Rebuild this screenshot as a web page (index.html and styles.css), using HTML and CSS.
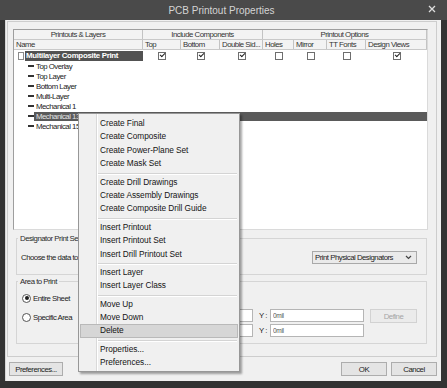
FILE: index.html
```html
<!DOCTYPE html>
<html>
<head>
	<title>PCB Printout Properties</title>
	<link rel="stylesheet" href="styles.css">
</head>
<body>
	<div class="titlebar">
		<span></span>
		<span class="title">PCB Printout Properties</span>
		<span class="close">
			<svg width="8" height="8" viewBox="0 0 8 8"><path d="M1 1 L7 7 M7 1 L1 7" stroke="#dedede" stroke-width="1.3" fill="none"/></svg>
		</span>
	</div>

	<div class="client">
		<div class="panel">
			<div class="list">
				<div class="hdr hdr-group">
					<div>Printouts &amp; Layers</div>
					<div class="span3">Include Components</div>
					<div class="span4">Printout Options</div>
				</div>
				<div class="hdr hdr-cols">
					<div>Name</div>
					<div>Top</div>
					<div>Bottom</div>
					<div>Double Sid...</div>
					<div>Holes</div>
					<div>Mirror</div>
					<div>TT Fonts</div>
					<div>Design Views</div>
				</div>

				<div class="printout">
					<div class="name"><span class="page"></span><span class="label">Multilayer Composite Print</span></div>
					<div class="cell"><span class="chk on"></span></div>
					<div class="cell"><span class="chk on"></span></div>
					<div class="cell"><span class="chk on"></span></div>
					<div class="cell"><span class="chk"></span></div>
					<div class="cell"><span class="chk"></span></div>
					<div class="cell"><span class="chk"></span></div>
					<div class="cell"><span class="chk on"></span></div>
				</div>

				<div class="layer"><span class="dash"></span><span class="label">Top Overlay</span></div>
				<div class="layer"><span class="dash"></span><span class="label">Top Layer</span></div>
				<div class="layer"><span class="dash"></span><span class="label">Bottom Layer</span></div>
				<div class="layer"><span class="dash"></span><span class="label">Multi-Layer</span></div>
				<div class="layer"><span class="dash"></span><span class="label">Mechanical 1</span></div>
				<div class="layer selected"><span class="dash"></span><span class="label">Mechanical 13</span></div>
				<div class="layer"><span class="dash"></span><span class="label">Mechanical 15</span></div>
			</div>

			<fieldset class="group designator">
				<legend>Designator Print Settings</legend>
				<div class="group-body">
					<span>Choose the data to print in designators</span>
					<div class="combo">
						<span>Print Physical Designators</span>
						<svg width="7" height="5" viewBox="0 0 7 5"><path d="M1 1 L3.5 3.5 L6 1" stroke="#444" stroke-width="1.2" fill="none"/></svg>
					</div>
				</div>
			</fieldset>

			<fieldset class="group area">
				<legend>Area to Print</legend>
				<div class="group-body">
					<div class="radios">
						<div class="radio on"><span class="dot"></span>Entire Sheet</div>
						<div class="radio"><span class="dot"></span>Specific Area</div>
					</div>
					<div class="coords">
						<div class="coord-row">
							<span class="axis">X :</span>
							<input type="text" class="field x-field" value="0mil" readonly>
							<span class="axis">Y :</span>
							<input type="text" class="field" value="0mil" readonly>
							<button class="btn define" disabled>Define</button>
						</div>
						<div class="coord-row">
							<span class="axis">X :</span>
							<input type="text" class="field x-field" value="0mil" readonly>
							<span class="axis">Y :</span>
							<input type="text" class="field" value="0mil" readonly>
							<span class="define-space"></span>
						</div>
					</div>
				</div>
			</fieldset>
		</div>

		<div class="buttons">
			<button class="btn prefs">Preferences...</button>
			<span class="spacer"></span>
			<button class="btn">OK</button>
			<button class="btn">Cancel</button>
		</div>
	</div>

	<!-- popup menu over the list -->
	<div class="menu">
		<div class="item">Create Final</div>
		<div class="item">Create Composite</div>
		<div class="item">Create Power-Plane Set</div>
		<div class="item">Create Mask Set</div>
		<div class="sep"></div>
		<div class="item">Create Drill Drawings</div>
		<div class="item">Create Assembly Drawings</div>
		<div class="item">Create Composite Drill Guide</div>
		<div class="sep"></div>
		<div class="item">Insert Printout</div>
		<div class="item">Insert Printout Set</div>
		<div class="item">Insert Drill Printout Set</div>
		<div class="sep"></div>
		<div class="item">Insert Layer</div>
		<div class="item">Insert Layer Class</div>
		<div class="sep"></div>
		<div class="item">Move Up</div>
		<div class="item">Move Down</div>
		<div class="item hot">Delete</div>
		<div class="sep"></div>
		<div class="item">Properties...</div>
		<div class="item">Preferences...</div>
	</div>
</body>
</html>
```

FILE: styles.css
```css
* {
	box-sizing: border-box;
}
html, body {
	margin: 0;
	padding: 0;
}
body {
	width: 447px;
	height: 388px;
	overflow: hidden;
	position: relative;
	background-color: #333333;
	font-family: "Liberation Sans", Arial, sans-serif;
	font-size: 7.8px;
	letter-spacing: -0.5px;
	color: #222222;
}

/* title bar */
.titlebar {
	height: 20px;
	background-color: #4a4a4a;
	display: grid;
	grid-template-columns: 1fr auto 1fr;
	align-items: center;
}
.title {
	font-size: 10px;
	letter-spacing: 0;
	color: #d4d4d4;
	padding-right: 4px;
}
.close {
	justify-self: end;
	display: flex;
	padding-right: 11px;
	padding-bottom: 3px;
}

/* window body */
.client {
	margin-left: 5px;
	width: 436px;
	height: 361px;
	background-color: #f0f0f0;
	border-left: 1px solid #d6d6d6;
	padding-top: 1px;
	padding-left: 1px;
}
.panel {
	width: 430px;
	height: 336px;
	border: 1px solid #cdcdcd;
	padding-top: 7px;
	padding-left: 5px;
}

/* printout list */
.list {
	width: 415px;
	height: 201px;
	border: 1px solid #9e9e9e;
	border-right-color: #dadada;
	border-bottom-color: #dadada;
	background-color: #ffffff;
}
.hdr {
	display: grid;
	grid-template-columns: 129px 38px 39px 43px 31px 33px 39px 61px;
	height: 10px;
	background-color: #f3f3f3;
	border-bottom: 1px solid #c9c9c9;
	line-height: 9px;
	color: #333333;
}
.hdr > div {
	border-right: 1px solid #c3c3c3;
	white-space: nowrap;
	overflow: hidden;
}
.hdr-group > div {
	text-align: center;
}
.hdr-group .span3 { grid-column: span 3; }
.hdr-group .span4 { grid-column: span 4; }
.hdr-cols > div {
	padding-left: 2px;
}

.printout {
	display: grid;
	grid-template-columns: 129px 38px 39px 43px 31px 33px 39px 61px;
	height: 11px;
	align-items: center;
}
.printout .name {
	display: flex;
	align-items: center;
	height: 11px;
	padding-left: 4px;
}
.page {
	width: 6px;
	height: 8px;
	background-color: #ffffff;
	border: 1px solid #8a8a8a;
	margin-right: 1px;
}
.printout .label {
	flex: 1;
	height: 10px;
	line-height: 10px;
	background-color: #525252;
	color: #ffffff;
	font-weight: bold;
	font-size: 7.9px;
	letter-spacing: -0.3px;
	padding-left: 1px;
	white-space: nowrap;
}
.cell {
	display: flex;
	justify-content: center;
}
.chk {
	width: 8px;
	height: 8px;
	border: 1px solid #6e6e6e;
	background-color: #ffffff;
	position: relative;
}
.chk.on::after {
	content: "";
	position: absolute;
	left: 1px;
	top: 0px;
	width: 4px;
	height: 2px;
	border-left: 1.5px solid #222222;
	border-bottom: 1.5px solid #222222;
	transform: rotate(-45deg);
}

.layer {
	display: flex;
	align-items: center;
	height: 10px;
	padding-left: 14px;
}
.dash {
	width: 6px;
	height: 2px;
	background-color: #333333;
}
.layer .label {
	padding-left: 2px;
	line-height: 9px;
	white-space: nowrap;
}
.layer.selected .label {
	flex: 1;
	background-color: #5a5a5a;
	color: #e4e4e4;
}

/* group boxes */
.group {
	margin: 0 0 0 3px;
	padding: 0;
	width: 411px;
	min-width: 0;
	border: 1px solid #d5d5d5;
}
.group legend {
	margin-left: 1px;
	padding: 0 2px;
	line-height: 9px;
	color: #2a2a2a;
}
.designator {
	margin-top: 4px;
}
.designator .group-body {
	display: flex;
	justify-content: space-between;
	align-items: center;
	padding: 8px 9px 10px 4px;
	white-space: nowrap;
}
.combo {
	width: 105px;
	height: 13px;
	border: 1px solid #a9a9a9;
	background-color: #eaeaea;
	display: flex;
	align-items: center;
	justify-content: space-between;
	padding: 0 4px 0 2px;
}

.area {
	margin-top: 2px;
}
.area .group-body {
	display: flex;
	justify-content: space-between;
	padding: 0 9px 6px 5px;
	white-space: nowrap;
}
.radios {
	display: flex;
	flex-direction: column;
	gap: 7px;
	padding-top: 6px;
}
.radio {
	display: flex;
	align-items: center;
	height: 12px;
}
.dot {
	width: 9px;
	height: 9px;
	border: 1px solid #555555;
	border-radius: 50%;
	background-color: #ffffff;
	margin-right: 2px;
	position: relative;
}
.radio.on .dot::after {
	content: "";
	position: absolute;
	left: 1.5px;
	top: 1.5px;
	width: 4px;
	height: 4px;
	border-radius: 50%;
	background-color: #1e1e1e;
}
.coords {
	display: flex;
	flex-direction: column;
	gap: 2px;
	padding-top: 23px;
}
.coord-row {
	display: flex;
	align-items: flex-start;
	height: 13px;
}
.axis {
	width: 12px;
	line-height: 13px;
	padding-left: 1px;
}
.field {
	width: 94px;
	height: 13px;
	border: 1px solid #b5b5b5;
	background-color: #ffffff;
	font-family: "Liberation Sans", Arial, sans-serif;
	font-size: 6.5px;
	letter-spacing: -0.3px;
	color: #555555;
	padding: 0 2px;
	margin: 0;
	outline: none;
}
.x-field {
	width: 80px;
	margin-right: 5px;
}
.btn {
	height: 14px;
	border: 1px solid #adadad;
	background-color: #e4e4e4;
	font-family: "Liberation Sans", Arial, sans-serif;
	font-size: 7.8px;
	letter-spacing: -0.5px;
	color: #222222;
	padding: 0;
	margin: 0;
}
.define {
	width: 47px;
	margin-left: 6px;
	color: #a5a5a5;
	border-color: #d2d2d2;
	background-color: #ebebeb;
}
.define-space {
	width: 47px;
	margin-left: 6px;
}

/* bottom buttons */
.buttons {
	display: flex;
	gap: 4px;
	margin-top: 5px;
	padding-left: 2px;
	padding-right: 4px;
}
.buttons .btn {
	width: 46px;
}
.buttons .prefs {
	width: 54px;
}
.spacer {
	flex: 1;
}

/* context menu */
.menu {
	position: absolute;
	left: 78px;
	top: 113px;
	width: 162px;
	height: 259px;
	padding: 3px 1px 2px 1px;
	border: 1px solid #979797;
	background-color: #f0f0f0;
	background-image: linear-gradient(to right, transparent 17px, #d9d9d9 17px, #d9d9d9 18px, #ffffff 18px, #ffffff 19px, transparent 19px);
	box-shadow: 2px 2px 2px rgba(0, 0, 0, 0.35);
	font-size: 8.3px;
	letter-spacing: -0.05px;
	color: #141414;
}
.item {
	height: 13.4px;
	line-height: 13.4px;
	padding-left: 20px;
	white-space: nowrap;
}
.item.hot {
	background-color: #d6d6d6;
	border: 1px solid #b9b9b9;
	line-height: 11.4px;
	padding-left: 19px;
}
.sep {
	height: 5px;
	margin-left: 18px;
	margin-right: 1px;
	background-image: linear-gradient(to bottom, transparent 2px, #d4d4d4 2px, #d4d4d4 3px, #ffffff 3px, #ffffff 4px, transparent 4px);
}
```
